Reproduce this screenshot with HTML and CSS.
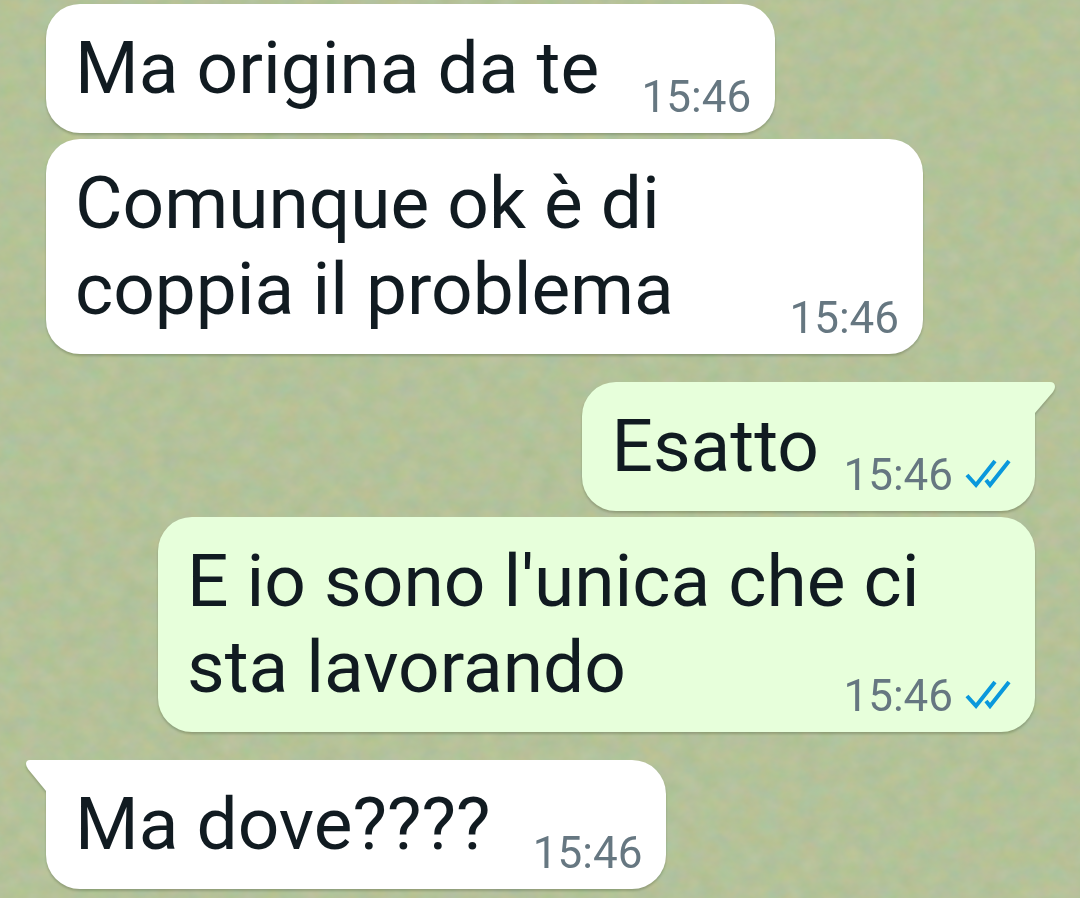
FILE: index.html
```html
<!DOCTYPE html>
<html lang="it">
<head>
<meta charset="utf-8">
<meta name="viewport" content="width=device-width, initial-scale=1">
<title>Chat</title>
<link rel="stylesheet" href="styles.css">
</head>
<body>
<svg class="wallpaper" aria-hidden="true">
  <filter id="paper" x="0" y="0" width="100%" height="100%" color-interpolation-filters="sRGB">
    <feTurbulence type="fractalNoise" baseFrequency="0.05 0.06" numOctaves="3" seed="8"/>
    <feColorMatrix values="0.1 0 0 0 0.656  0 0.05 0 0 0.735  0 0 0.1 0 0.55  0 0 0 0 1"/>
  </filter>
  <rect width="100%" height="100%" filter="url(#paper)"/>
</svg>
<main class="chat">
  <ol class="messages">
    <li class="message message--in">
      <div class="bubble">
        <p class="text">Ma origina da te</p>
        <div class="meta"><time datetime="15:46">15:46</time></div>
      </div>
    </li>
    <li class="message message--in">
      <div class="bubble">
        <p class="text">Comunque ok è di coppia il problema</p>
        <div class="meta"><time datetime="15:46">15:46</time></div>
      </div>
    </li>
    <li class="message message--out message--first">
      <div class="bubble">
        <svg class="tail" viewBox="0 0 21 31" aria-hidden="true"><path d="M0 0H15Q20 0 20 5Q20 7 18 10L0 31Z"/></svg>
        <p class="text">Esatto</p>
        <div class="meta"><time datetime="15:46">15:46</time>
          <svg class="ticks" viewBox="0 0 46 32" role="img" aria-label="Letto"><path d="M2 16L11 26L30 2M21 21L25 26L44 2"/></svg>
        </div>
      </div>
    </li>
    <li class="message message--out">
      <div class="bubble">
        <p class="text">E io sono l'unica che ci sta lavorando</p>
        <div class="meta"><time datetime="15:46">15:46</time>
          <svg class="ticks" viewBox="0 0 46 32" role="img" aria-label="Letto"><path d="M2 16L11 26L30 2M21 21L25 26L44 2"/></svg>
        </div>
      </div>
    </li>
    <li class="message message--in message--first">
      <div class="bubble">
        <svg class="tail" viewBox="0 0 21 31" aria-hidden="true"><path d="M21 0H5Q1 0 1 4Q1 6 3 9L21 31Z"/></svg>
        <p class="text">Ma dove????</p>
        <div class="meta"><time datetime="15:46">15:46</time></div>
      </div>
    </li>
  </ol>
</main>
</body>
</html>
```
FILE: styles.css
```css
* {
  box-sizing: border-box;
}

body {
  margin: 0;
  background: #b4c299;
  color: #111b21;
  font-family: Roboto, "Liberation Sans", sans-serif;
}

.wallpaper {
  position: fixed;
  inset: 0;
  width: 100%;
  height: 100%;
  z-index: -1;
}

.chat {
  padding: 4px 45px 9px 46px;
}

.messages {
  display: flex;
  flex-direction: column;
  gap: 6px;
  margin: 0;
  padding: 0;
  list-style: none;
}

.message {
  display: flex;
}

.message--out {
  justify-content: flex-end;
}

.message--first,
.message--out + .message--in {
  margin-top: 22px;
}

.bubble {
  position: relative;
  display: grid;
  max-width: 877px;
  padding: 0 24px 0 29px;
  border-radius: 34px;
  background: #fff;
  fill: #fff;
  filter: drop-shadow(0 2px 1px rgba(60, 75, 45, 0.3));
}

.message--out .bubble {
  background: #e7ffdb;
  fill: #e7ffdb;
}

.message--out.message--first .bubble {
  border-top-right-radius: 0;
}

.message--in.message--first .bubble {
  border-top-left-radius: 0;
}

.text {
  grid-area: 1 / 1;
  margin: 0;
  padding: 21px 17px 22px 0;
  font-size: 73px;
  line-height: 86px;
}

/* Keeps the last line clear of the time. */
.text::after {
  content: "";
  display: inline-block;
  width: 135px;
}

.message--out .text::after {
  width: 175px;
}

.meta {
  grid-area: 1 / 1;
  place-self: end;
  display: flex;
  align-items: center;
  gap: 12px;
  padding-bottom: 10px;
  color: #667781;
  font-size: 44px;
  line-height: 52px;
}

.ticks {
  width: 46px;
  height: 32px;
  fill: none;
  stroke: #0a98dc;
  stroke-width: 4;
}

.tail {
  position: absolute;
  top: 0;
  width: 21px;
  height: 31px;
}

.message--out .tail {
  left: 100%;
}

.message--in .tail {
  right: 100%;
}
```
